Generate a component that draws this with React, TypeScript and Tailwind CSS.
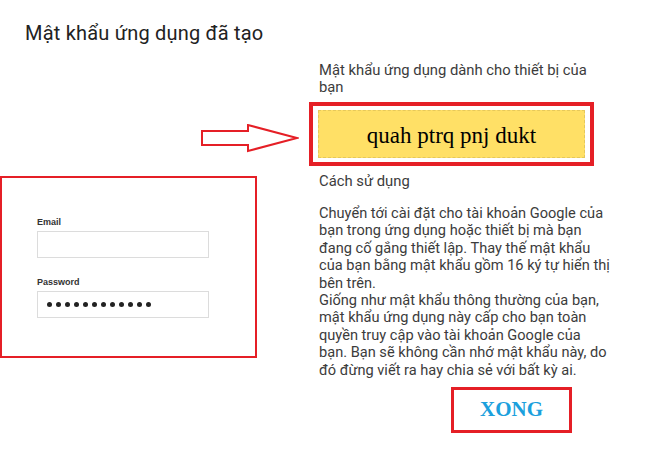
import React from "react";

const RED = "border-[#e51f26]";

const firstLines = [
    "Chuyển tới cài đặt cho tài khoản Google của",
    "bạn trong ứng dụng hoặc thiết bị mà bạn",
    "đang cố gắng thiết lập. Thay thế mật khẩu",
    "của bạn bằng mật khẩu gồm 16 ký tự hiển thị",
    "bên trên.",
];

const secondLines = [
    "Giống như mật khẩu thông thường của bạn,",
    "mật khẩu ứng dụng này cấp cho bạn toàn",
    "quyền truy cập vào tài khoản Google của",
    "bạn. Bạn sẽ không cần nhớ mật khẩu này, do",
    "đó đừng viết ra hay chia sẻ với bất kỳ ai.",
];

const LoginCard: React.FunctionComponent = () => {
    const dots = Array.from({ length: 12 });
    return (
        <div className={`w-[257px] h-[182px] border-2 ${RED} pt-[38px] pl-[35px] font-['Liberation_Sans',Arial,sans-serif]`}>
            <div className="text-[9px] leading-[12px] font-semibold text-[#333]">Email</div>
            <div className="mt-[3px] w-[172px] h-[27px] border border-[#dcdcdc] bg-white"></div>
            <div className="mt-[18px] text-[9px] leading-[12px] font-semibold text-[#333]">Password</div>
            <div className="mt-[3px] w-[172px] h-[27px] border border-[#dcdcdc] bg-white flex items-center gap-[4px] pl-[9px]">
                {dots.map((_, i) => (
                    <span key={i} className="w-[5px] h-[5px] rounded-full bg-[#222]"></span>
                ))}
            </div>
        </div>
    );
};

const Arrow: React.FunctionComponent = () => (
    <svg width="98" height="29" viewBox="0 0 98 29" className="block">
        <polygon
            points="1,7 47,7 47,1 96,14 47,27 47,21 1,21"
            fill="#fff"
            stroke="#e51f26"
            strokeWidth="2"
            strokeLinejoin="miter"
        />
    </svg>
);

export default function App() {
    return (
        <div className="w-[650px] h-[450px] bg-white flex font-['Roboto',Arial,sans-serif] text-[#3c3c3c]">
            <div className="w-[308px] flex flex-col">
                <h1 className="pt-[21px] pl-[25px] text-[20px] leading-[25px] tracking-[0.2px] text-[#222]">
                    Mật khẩu ứng dụng đã tạo
                </h1>
                <div className="mt-[78px] ml-[201px]">
                    <Arrow />
                </div>
                <div className="mt-[23px]">
                    <LoginCard />
                </div>
            </div>
            <div className="w-[320px] pt-[62px]">
                <p className="pl-[11px] w-[295px] text-[14.8px] leading-[17px]">
                    Mật khẩu ứng dụng dành cho thiết bị của bạn
                </p>
                <div className={`mt-[6px] ml-[1px] w-[285px] h-[64px] border-4 ${RED} px-[5px] py-[4px]`}>
                    <div className="h-full pt-[4px] bg-[#ffe066] border border-dashed border-[#e6c85a] flex items-center justify-center font-['Liberation_Serif','Times_New_Roman',serif] text-[23px] text-black">
                        quah ptrq pnj dukt
                    </div>
                </div>
                <h2 className="mt-[7px] pl-[11px] text-[14.8px] leading-[17px]">Cách sử dụng</h2>
                <div className="mt-[15px] pl-[11px] text-[14.6px] leading-[17.4px] whitespace-nowrap">
                    <p>
                        {firstLines.map((line, i) => (
                            <span key={i} className="block">{line}</span>
                        ))}
                    </p>
                    <p>
                        {secondLines.map((line, i) => (
                            <span key={i} className="block">{line}</span>
                        ))}
                    </p>
                </div>
                <div className={`mt-[8px] ml-[143px] w-[121px] h-[46px] border-[3px] ${RED} flex items-center justify-center`}>
                    <span className="font-['Liberation_Serif','Times_New_Roman',serif] font-bold text-[21px] text-[#1ba0dd]">
                        XONG
                    </span>
                </div>
            </div>
        </div>
    );
}
